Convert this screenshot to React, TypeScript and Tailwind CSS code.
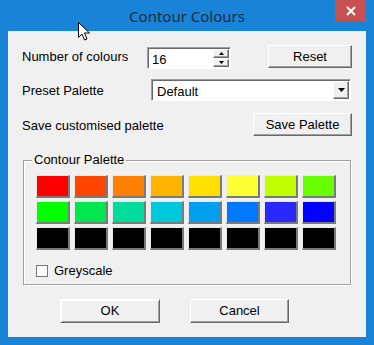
const palette = [
  ['#ff0000', '#ff4500', '#ff8000', '#ffb400', '#ffe000', '#ffff33', '#c0ff00', '#66ff00'],
  ['#00ff00', '#00e64c', '#00dc9c', '#00c8dc', '#00a0f0', '#0078ff', '#2828ff', '#0000ff'],
  ['#000000', '#000000', '#000000', '#000000', '#000000', '#000000', '#000000', '#000000'],
];

const btn =
  'flex items-center justify-center bg-[#f0f0f0] border border-t-white border-l-white border-r-[#696969] border-b-[#696969] shadow-[inset_-1px_-1px_0_#a0a0a0] text-[13px] text-black';

function Swatch({ color }: { color: string }) {
  return (
    <div
      className="w-[34px] h-[23px] border-t border-l border-t-[#e8e8e8] border-l-[#e8e8e8] border-r-2 border-b-2 border-r-[#7a7a7a] border-b-[#7a7a7a]"
      style={{ backgroundColor: color }}
    />
  );
}

export default function App() {
  return (
    <div
      className="w-[374px] h-[345px] bg-[#1883d7] flex flex-col relative overflow-hidden"
      style={{ fontFamily: '"Liberation Sans", Arial, sans-serif' }}
    >
      {/* title bar */}
      <div className="h-[31px] relative flex items-start justify-center">
        <span
          className="mt-[5px] text-[15px] text-[#1f2d3d]"
          style={{ fontFamily: '"Noto Sans", "Open Sans", sans-serif' }}
        >
          Contour Colours
        </span>
        <div className="absolute right-[8px] top-0 w-[31px] h-[21px] bg-[#c75050] flex items-center justify-center">
          <svg width="10" height="10" viewBox="0 0 10 10">
            <path d="M1 1 L9 9 M9 1 L1 9" stroke="white" strokeWidth="2" />
          </svg>
        </div>
      </div>

      {/* client area */}
      <div className="mx-[8px] h-[306px] bg-[#f0f0f0] flex flex-col text-[13px] text-black">
        <div className="mt-[14px] pl-[14px] h-[23px] flex items-center">
          <span className="w-[125px]">Number of colours</span>
          <div className="w-[84px] h-[22px] mt-[3px] bg-white flex items-stretch border border-t-[#a0a0a0] border-l-[#a0a0a0] border-r-white border-b-white shadow-[inset_1px_1px_0_#696969]">
            <span className="flex-1 pl-[4px] pt-[2px]">16</span>
            <div className="w-[17px] flex flex-col gap-[1px] py-[1px] pr-[1px]">
              <div className={btn + ' flex-1'}>
                <svg width="5" height="3" viewBox="0 0 5 3">
                  <path d="M2.5 0 L5 3 L0 3 Z" fill="black" />
                </svg>
              </div>
              <div className={btn + ' flex-1'}>
                <svg width="5" height="3" viewBox="0 0 5 3">
                  <path d="M0 0 L5 0 L2.5 3 Z" fill="black" />
                </svg>
              </div>
            </div>
          </div>
          <button className={btn + ' ml-[37px] w-[84px] h-[23px]'}>Reset</button>
        </div>

        <div className="mt-[11px] pl-[14px] h-[22px] flex items-center">
          <span className="w-[129px] pt-[2px]">Preset Palette</span>
          <div className="w-[200px] h-[22px] bg-white flex items-stretch border border-t-[#a0a0a0] border-l-[#a0a0a0] border-r-white border-b-white shadow-[inset_1px_1px_0_#696969]">
            <span className="flex-1 pl-[5px] pt-[2px]">Default</span>
            <div className="py-[1px] pr-[1px]">
              <div className={btn + ' w-[16px] h-full'}>
                <svg width="7" height="4" viewBox="0 0 7 4">
                  <path d="M0 0 L7 0 L3.5 4 Z" fill="black" />
                </svg>
              </div>
            </div>
          </div>
        </div>

        <div className="mt-[12px] pl-[14px] h-[23px] flex items-center">
          <span className="w-[231px] pt-[3px]">Save customised palette</span>
          <button className={btn + ' w-[99px] h-[23px]'}>Save Palette</button>
        </div>

        <div className="mt-[24px] ml-[15px] w-[328px] h-[125px] relative border border-[#a0a0a0] shadow-[1px_1px_0_white,inset_1px_1px_0_white] flex flex-col">
          <span className="absolute left-[8px] -top-[9px] px-[2px] bg-[#f0f0f0] leading-[16px]">
            Contour Palette
          </span>
          <div className="mt-[14px] ml-[12px] grid grid-cols-[repeat(8,34px)] gap-x-[4px] gap-y-[3px]">
            {palette.flatMap((row, r) => row.map((c, i) => <Swatch key={r + '-' + i} color={c} />))}
          </div>
          <div className="mt-[11px] ml-[12px] flex items-center gap-[6px]">
            <div className="w-[12px] h-[12px] bg-white border border-[#777]" />
            <span>Greyscale</span>
          </div>
        </div>

        <div className="mt-[14px] flex">
          <button className={btn + ' ml-[52px] w-[100px] h-[24px] border-[#646464] border-t-[#646464] border-l-[#646464] shadow-[inset_1px_1px_0_white,inset_-1px_-1px_0_#a0a0a0]'}>
            OK
          </button>
          <button className={btn + ' ml-[30px] w-[99px] h-[24px]'}>Cancel</button>
        </div>
      </div>

      {/* mouse pointer */}
      <svg className="absolute left-[78px] top-[22px]" width="13" height="20" viewBox="0 0 13 20">
        <path
          d="M0.5 0.5 L0.5 15.5 L4 12 L6.5 18 L9 17 L6.5 11 L11.5 11 Z"
          fill="white"
          stroke="black"
          strokeWidth="1"
          strokeLinejoin="miter"
        />
      </svg>
    </div>
  );
}
